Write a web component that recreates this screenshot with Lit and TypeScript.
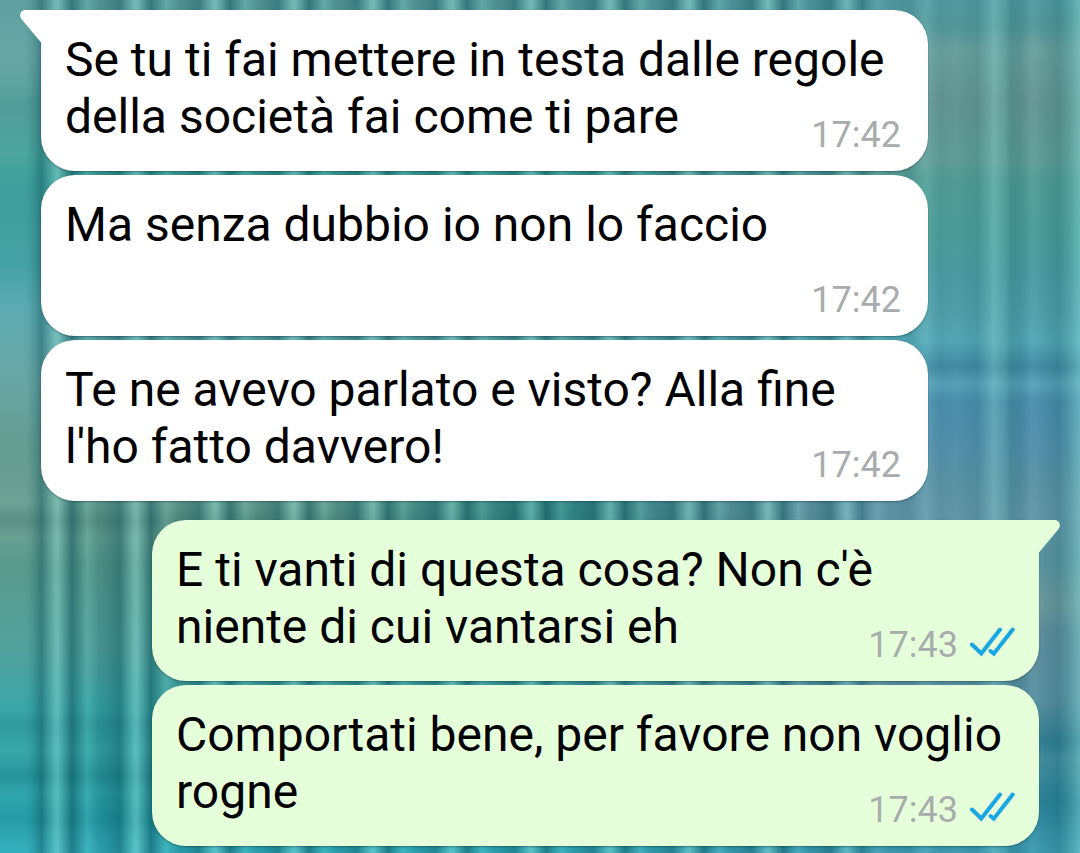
import { LitElement, html, css } from "lit";
import { customElement, property } from "lit/decorators.js";

interface Message {
  text: string;
  time: string;
  outgoing: boolean;
  first: boolean;
}

const MESSAGES: Message[] = [
  { text: "Se tu ti fai mettere in testa dalle regole della società fai come ti pare", time: "17:42", outgoing: false, first: true },
  { text: "Ma senza dubbio io non lo faccio", time: "17:42", outgoing: false, first: false },
  { text: "Te ne avevo parlato e visto? Alla fine l'ho fatto davvero!", time: "17:42", outgoing: false, first: false },
  { text: "E ti vanti di questa cosa? Non c'è niente di cui vantarsi eh", time: "17:43", outgoing: true, first: true },
  { text: "Comportati bene, per favore non voglio rogne", time: "17:43", outgoing: true, first: false },
];

@customElement("chat-bubble")
export class ChatBubble extends LitElement {
  @property({ attribute: false }) message!: Message;

  static styles = css`
    :host {
      display: block;
    }
    .bubble {
      position: relative;
      display: flow-root;
      box-sizing: border-box;
      width: calc(100% - 111px);
      padding: 21px 24px 16px;
      border-radius: 34px;
      background: #ffffff;
      box-shadow: 0 1px 2px rgba(0, 40, 50, 0.4);
      font-size: 48px;
      line-height: 57px;
      color: #000000;
    }
    .outgoing {
      margin-left: auto;
      background: #e6ffdb;
    }
    .first {
      border-top-left-radius: 0;
    }
    .outgoing.first {
      border-top-left-radius: 34px;
      border-top-right-radius: 0;
    }
    /* Sits beside the last line when there is room, otherwise drops below it. */
    .meta {
      float: right;
      display: flex;
      align-items: center;
      gap: 11px;
      margin: 27px 0 0 50px;
      padding-right: 3px;
      font-size: 36px;
      line-height: 40px;
      color: #a8acad;
    }
    .outgoing .meta {
      padding-right: 0;
    }
    .ticks {
      display: block;
      width: 46px;
      height: 40px;
    }
    .tail {
      position: absolute;
      top: 0;
      right: 100%;
      width: 21px;
      height: 33px;
      fill: #ffffff;
    }
    .outgoing .tail {
      right: auto;
      left: 100%;
      transform: scaleX(-1);
      fill: #e6ffdb;
    }
  `;

  render() {
    const { text, time, outgoing, first } = this.message;
    return html`
      <article class="bubble ${outgoing ? "outgoing" : "incoming"} ${first ? "first" : ""}">
        ${first
          ? html`<svg class="tail" viewBox="0 0 21 33" aria-hidden="true">
              <path d="M21 0H5.5C.6 0-1.3 5 1.4 9L21 32.5Z" />
            </svg>`
          : null}
        <span>${text}</span>
        <div class="meta">
          <time>${time}</time>
          ${outgoing
            ? html`<svg class="ticks" viewBox="0 0 46 40" role="img" aria-label="Letto">
                <path
                  d="M3 19.5 12.3 28.5 31 4.5M21.5 26 24.8 28.7 43.7 4.5"
                  fill="none"
                  stroke="#1aa6e2"
                  stroke-width="4"
                  stroke-linecap="round"
                  stroke-linejoin="miter"
                />
              </svg>`
            : null}
        </div>
      </article>
    `;
  }
}

@customElement("app-root")
export class AppRoot extends LitElement {
  static styles = css`
    :host {
      display: block;
      font-family: Roboto, "Noto Sans", sans-serif;
    }
    .chat {
      position: relative;
      isolation: isolate;
      display: flex;
      flex-direction: column;
      gap: 4px;
      box-sizing: border-box;
      min-height: 100vh;
      padding: 10px 41px 7px;
      overflow: hidden;
      background:
        radial-gradient(ellipse 260px 200px at 53% 60%, rgba(36, 136, 134, 0.8), transparent),
        linear-gradient(
          #5f9fa0 0, #68a6a4 6%, #5da39e 10%, #529c98 12%, #4ca69e 18%, #3fa09c 21%, #3f9e9c 24%,
          #45a2a4 31%, #5caab2 36%, #68a6a4 44%, #659c90 53%, #6ba294 59%, #5b9084 61%, #68a092 63%,
          #5a9a8c 66%, #52a29c 76%, #3aa6a8 83%, #309a9e 85%, #38a8aa 88%, #26949a 91%,
          #30a6ac 93%, #249aa4 96%, #30a8b4 98%, #34b0bc 100%
        );
    }
    .chat::before,
    .chat::after {
      content: "";
      position: absolute;
      inset: 0;
      z-index: -1;
    }
    .chat::before {
      background:
        linear-gradient(
          90deg, transparent 86%, rgba(0, 80, 85, 0.12) 90.5%, rgba(150, 225, 220, 0.3) 92%,
          rgba(0, 75, 80, 0.22) 93.6%, transparent 95.5%, rgba(0, 75, 80, 0.18) 98%,
          rgba(140, 225, 220, 0.36) 100%
        ),
        linear-gradient(
          #579fa6 0, #5a9c9e 3%, #70a5a1 6%, #6a9a96 12%, #66a29a 19%, #58a098 21%, #50a29c 27%,
          #50a0a6 32%, #56a4b0 37%, #5aacbc 40%, #458ea6 43%, #5ea6be 45%, #5092b0 47%,
          #5a94b0 53%, #6096aa 56%, #689aac 60%, #6199a6 66%, #759fa2 71%, #6492a2 74%,
          #6094a6 82%, #368297 87%, #4892a4 89%, #2e859c 94%, #44a0b6 100%
        );
      -webkit-mask-image: linear-gradient(90deg, transparent 48%, #000 80%);
      mask-image: linear-gradient(90deg, transparent 48%, #000 80%);
    }
    .chat::after {
      left: 26px;
      background: repeating-linear-gradient(
        90deg,
        rgba(0, 65, 75, 0.2) 0, rgba(0, 65, 75, 0.38) 15px, rgba(150, 225, 215, 0.32) 29px,
        rgba(150, 225, 215, 0.36) 32px, rgba(0, 65, 75, 0.44) 46px, rgba(130, 215, 205, 0.14) 61px,
        rgba(0, 65, 75, 0.16) 73px, rgba(0, 65, 75, 0.2) 79px
      );
      -webkit-mask-image: linear-gradient(90deg, transparent 0, #000 16px, #000 76%, rgba(0, 0, 0, 0.15) 87%);
      mask-image: linear-gradient(90deg, transparent 0, #000 16px, #000 76%, rgba(0, 0, 0, 0.15) 87%);
    }
    .turn {
      margin-top: 15px;
    }
  `;

  render() {
    return html`
      <main class="chat">
        ${MESSAGES.map(
          (m, i) => html`<chat-bubble class=${i > 0 && m.first ? "turn" : ""} .message=${m}></chat-bubble>`,
        )}
      </main>
    `;
  }
}
